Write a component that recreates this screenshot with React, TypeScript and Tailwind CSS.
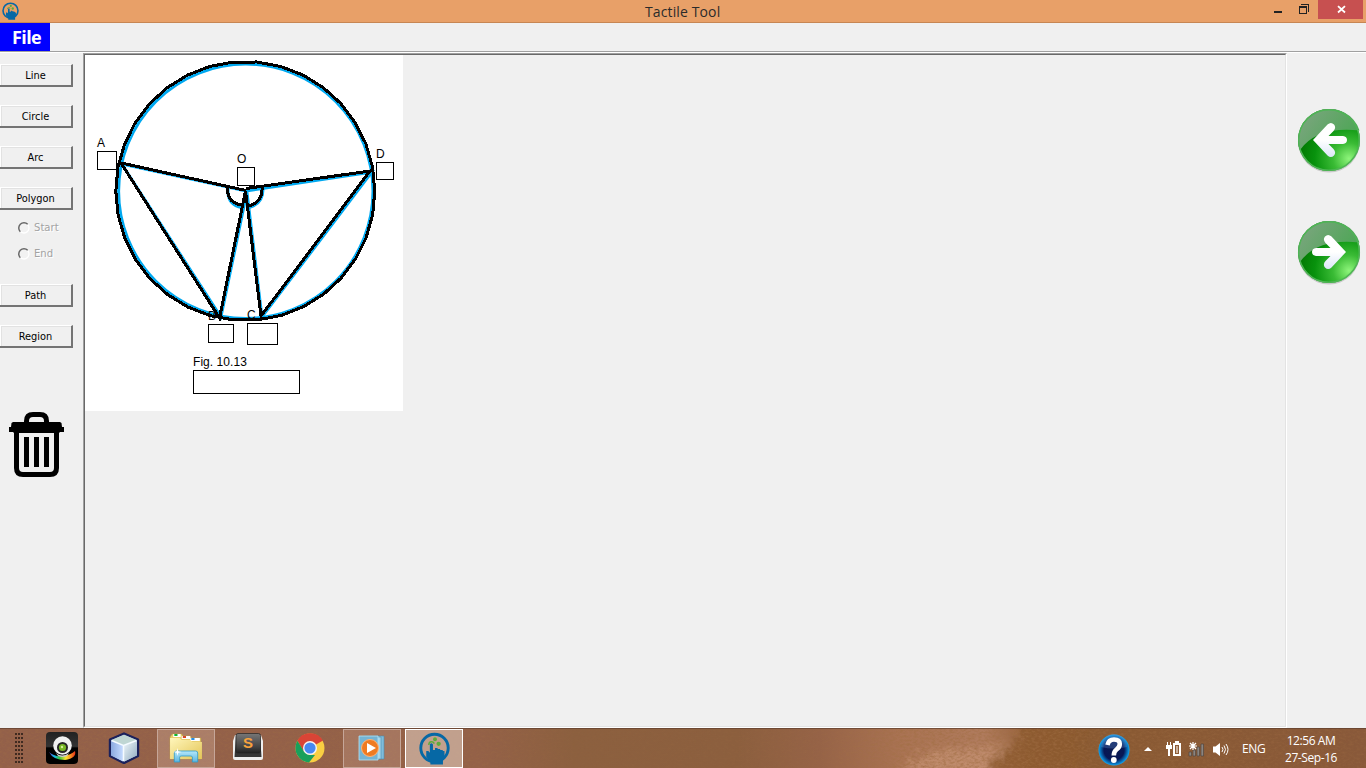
import React from "react";

const TOOLS_TOP = ["Line", "Circle", "Arc", "Polygon"];
const TOOLS_BOTTOM = ["Path", "Region"];

function HandIcon({ className }: { className: string }) {
  return (
    <svg viewBox="0 0 30 32" className={className}>
      <circle cx="15" cy="15.5" r="13.3" fill="none" stroke="#0668a5" strokeWidth="2.800" />
      <path d="M10.500 12q1.500-2 3 0v5.500h2v-2h2.500v1h2.500v1h2.500v1h1.700v6l-1.500 3v4H11v-3l-4-4.500v-5.500h2l1.500 1.500z" fill="#0668a5" />
      <circle cx="15.500" cy="7" r="1.900" fill="#5cac3b" />
      <circle cx="19" cy="11.500" r="2.100" fill="#5cac3b" />
      <path d="M9.500 12.500q0-3 2.500-3t2.500 2" fill="none" stroke="#5cac3b" strokeWidth="1.400" />
    </svg>
  );
}

function TitleBar() {
  return (
    <header className="flex h-[23px] shrink-0 border-b border-[#c78653] bg-[#e8a068] text-[#2b2b2b]">
      <div className="w-[645px] pt-[2px] pl-[2px]">
        <HandIcon className="h-[18px] w-[17px]" />
      </div>
      <div className="w-[625px] whitespace-nowrap font-['Open_Sans','Noto_Sans',sans-serif] text-[14px] leading-[23px] tracking-[0.120px]">Tactile Tool</div>
      <svg className="h-[22px] w-[48px]" viewBox="0 0 48 22" shapeRendering="crispEdges">
        <path d="M4 11h8v2H4z" fill="#222" />
        <path d="M29.500 6.500h7v7h-7zM31 4.500h7.500V12" fill="none" stroke="#222" />
        <path d="M29 6h8v2h-8z" fill="#222" />
      </svg>
      <div className="flex h-[19px] w-[45px] justify-center bg-[#c75050]">
        <svg className="mt-[5px] ml-[1px] h-[9px] w-[9px]" viewBox="0 0 9 9">
          <path d="M1 1.200l7 6.300M8 1.200l-7 6.300" stroke="#fff" strokeWidth="1.800" />
        </svg>
      </div>
    </header>
  );
}

function ToolButton({ label }: { label: string }) {
  return (
    <button className="h-[23px] w-[73px] border-t border-r-2 border-b-2 border-t-white border-r-[#747474] border-b-[#747474] bg-[#f0f0f0] pt-[2px] text-[10.900px] leading-[18px] text-black shadow-[inset_1px_0_#fff,inset_2px_1px_#e2e2e2]">
      {label}
    </button>
  );
}

function RadioRow({ label }: { label: string }) {
  return (
    <div className="flex h-[26px] items-center gap-[4px] pl-[18px] text-[11.200px] text-[#a3a3a3] [text-shadow:1px_1px_#fff]">
      <svg className="h-[12px] w-[12px]" viewBox="0 0 12 12">
        <circle cx="6" cy="6" r="5" fill="#f2f2f2" stroke="#fff" strokeWidth="1.300" />
        <path d="M2.300 9.700A5 5 0 0 1 9.700 2.300" fill="none" stroke="#666" strokeWidth="1.500" />
      </svg>
      <span className="pt-[1px]">{label}</span>
    </div>
  );
}

function TrashIcon() {
  return (
    <svg className="mt-[64px] ml-[9px] h-[65px] w-[55px]" viewBox="0 0 55 65">
      <path d="M15 12V9q0-9 9-9h7q9 0 9 9v3h-5V9q0-4-4-4h-7q-4 0-4 4v3z" />
      <path d="M4 10h47l1.500 1 .5 4h2v5h-4.500v1h-46v-1H0v-5h2l.500-4z" />
      <path d="M7.500 18v38q0 6.500 6.500 6.500h27q6.500 0 6.500-6.500V18" fill="none" stroke="#000" strokeWidth="5" />
      <path d="M15 25h5v30h-5zM25 25h5v30h-5zM35 25h5v30h-5z" />
    </svg>
  );
}

function Sidebar() {
  return (
    <aside className="w-[83px] shrink-0 pt-[11px] font-['DejaVu_Sans_Condensed','DejaVu_Sans',sans-serif]">
      <div className="flex flex-col gap-[18px]">
        {TOOLS_TOP.map((t) => <ToolButton key={t} label={t} />)}
      </div>
      <div className="h-[74px] pt-[5px]">
        <RadioRow label="Start" />
        <RadioRow label="End" />
      </div>
      <div className="flex flex-col gap-[18px]">
        {TOOLS_BOTTOM.map((t) => <ToolButton key={t} label={t} />)}
      </div>
      <TrashIcon />
    </aside>
  );
}

const ring = Array.from({ length: 34 }, (_, i) => {
  const a = (i / 34) * Math.PI * 2 - Math.PI / 2 + 0.09;
  return `${(160.3 + 129.5 * Math.cos(a)).toFixed(1)},${(136 + 129.5 * Math.sin(a)).toFixed(1)}`;
}).join(" ");

function Figure() {
  return (
    <svg className="block h-[356px] w-[318px] bg-white" viewBox="0 0 318 356">
      <g fill="none" stroke="#00a8ef" strokeWidth="3">
        <circle cx="160.800" cy="136.300" r="127.200" strokeWidth="3" />
        <path d="M36 109L161 136L287 117L177 262L162 137L136 262L36.500 108.500" strokeWidth="2.800" />
        <path d="M143 134q-1 16 14 18.500M178 134q0 15-14 18.500" />
      </g>
      <g fill="none" stroke="#000" strokeWidth="3" shapeRendering="crispEdges">
        <polygon points={ring} />
        <path d="M34 107.500L161 135.500M36 108L134.500 263L160.500 136L176 261L285 116L161 133.500" />
        <path d="M142.500 132q-1 15.500 14 18M177 132q1 15-13 19" />
      </g>
      <g fill="none" stroke="#000" shapeRendering="crispEdges">
        <path d="M12.500 96.500h19v18h-19zM152.500 112.500h17v18h-17zM291.500 107.500h17v17h-17zM123.500 269.500h25v18h-25zM162.500 268.500h30v21h-30zM108.500 315.500h106v23h-106z" />
      </g>
      <g className="font-['Liberation_Sans',sans-serif] text-[12px]" fill="#000">
        <text x="12" y="92">A</text>
        <text x="152" y="108">O</text>
        <text x="291" y="103">D</text>
        <text x="123" y="265">B</text>
        <text x="162" y="264">C</text>
        <text x="108" y="311" className="tracking-[0.050px]">Fig. 10.13</text>
      </g>
    </svg>
  );
}

function ArrowOrb({ flip, id }: { flip: boolean; id: string }) {
  return (
    <svg className="h-[66px] w-[66px]" viewBox="0 0 66 66">
      <defs>
        <radialGradient id={id} cx="0.82" cy="0.8" r="0.85">
          <stop offset="0" stopColor="#8ef57b" />
          <stop offset="0.3" stopColor="#3abb35" />
          <stop offset="0.65" stopColor="#08920d" />
          <stop offset="1" stopColor="#007400" />
        </radialGradient>
        <linearGradient id={id + "g"} x1="0" y1="0" x2="1" y2="0.5">
          <stop offset="0" stopColor="#80a583" />
          <stop offset="1" stopColor="#4da655" />
        </linearGradient>
        <linearGradient id={id + "w"} x1="0" y1="0" x2="0" y2="1">
          <stop offset="0.5" stopColor="#fff" />
          <stop offset="1" stopColor="#dbe7f8" />
        </linearGradient>
      </defs>
      <circle cx="33" cy="34.500" r="31" fill="#999" opacity=".45" />
      <circle cx="33" cy="33" r="31" fill={`url(#${id})`} />
      <path d="M4 43A31 31 0 1 1 63.500 23.500Q21 19 4 43z" fill={`url(#${id}g)`} />
      <circle cx="33" cy="33" r="30.300" fill="none" stroke="#4fb456" strokeWidth="1.500" />
      <g transform={flip ? "matrix(-1 0 0 1 67 0)" : undefined}>
        <path d="M17 33L31.500 17.500Q35 14.500 38 17.500Q40.500 20.500 37.500 24L32.500 29H47Q51 29.500 51 33Q51 36.500 47 37H32.500L37.500 42Q40.500 45.500 38 48.500Q35 51.500 31.500 48.500z" fill={`url(#${id}w)`} />
      </g>
    </svg>
  );
}

function Workspace() {
  return (
    <div className="flex min-h-0 flex-1">
      <Sidebar />
      <main className="w-[1204px] shrink-0 border-t border-r border-b border-l border-t-[#a0a0a0] border-r-white border-b-white border-l-[#a0a0a0]">
        <div className="h-full border border-t-[#696969] border-r-[#e3e3e3] border-b-[#e3e3e3] border-l-[#696969]">
          <Figure />
        </div>
      </main>
      <aside className="flex w-[79px] flex-col gap-[46px] pt-[54px] pl-[9px]">
        <ArrowOrb flip={false} id="prev" />
        <ArrowOrb flip id="next" />
      </aside>
    </div>
  );
}

function WebcamIcon() {
  return (
    <svg className="h-[32px] w-[32px]" viewBox="0 0 32 32">
      <defs>
        <linearGradient id="rainbow">
          <stop offset="0" stopColor="#6838c8" /><stop offset=".2" stopColor="#12b9ed" /><stop offset=".4" stopColor="#3dc63b" />
          <stop offset=".65" stopColor="#ffe32e" /><stop offset="1" stopColor="#e93118" />
        </linearGradient>
        <linearGradient id="camdark" x1="0" y1="0" x2="0" y2="1">
          <stop offset="0" stopColor="#222" /><stop offset=".45" stopColor="#333" /><stop offset=".5" stopColor="#000" />
        </linearGradient>
      </defs>
      <rect width="32" height="32" rx="4" fill="url(#camdark)" />
      <path d="M3 20Q8 25 17 24Q25 23 29 19Q31 26 19 28Q7 28 3 20z" fill="url(#rainbow)" />
      <circle cx="16.500" cy="13.500" r="9.300" fill="#f1f1f1" />
      <path d="M10 21q6 5 13 0l-2 3q-5 2-9 0z" fill="#ccc" />
      <circle cx="16.500" cy="15.500" r="5.500" fill="#252525" />
      <circle cx="16.500" cy="15.500" r="3.600" fill="#76b624" />
      <circle cx="16" cy="15" r="1.200" fill="#d4ef99" />
    </svg>
  );
}

function CubeIcon() {
  return (
    <svg className="h-[32px] w-[32px]" viewBox="0 0 32 32">
      <defs>
        <linearGradient id="cubeleft"><stop stopColor="#8ba9df" /><stop offset="1" stopColor="#c5dbff" /></linearGradient>
        <linearGradient id="cuberight" x1="0" y1="0" x2="1" y2="1"><stop stopColor="#eef7fa" /><stop offset="1" stopColor="#91abc0" /></linearGradient>
      </defs>
      <path d="M16 1.500L30 7.500V24L16 31L2 24V7.500z" fill="#aac0db" stroke="#1b215b" strokeWidth="2.400" strokeLinejoin="round" />
      <path d="M16 2.700L28.500 8L16 13L3.500 8z" fill="#bfd6d3" />
      <path d="M3 8.500L15 13.500V29.500L3 23.500z" fill="url(#cubeleft)" />
      <path d="M16 13.500L29 8.500V23.500L16 29.500z" fill="url(#cuberight)" />
      <path d="M3.500 8.500L15.500 13.500L28.500 8.500M15.500 14v15" fill="none" stroke="#f5fbff" strokeWidth="1.500" />
    </svg>
  );
}

function ExplorerIcon() {
  return (
    <svg className="h-[32px] w-[34px]" viewBox="0 0 32 32" preserveAspectRatio="none">
      <defs>
        <linearGradient id="folder" x1="0" y1="0" x2="1" y2="1"><stop stopColor="#fff6bc" /><stop offset="1" stopColor="#e4c657" /></linearGradient>
        <linearGradient id="stand" x1="0" y1="0" x2="0" y2="1"><stop stopColor="#b4e7fa" /><stop offset="1" stopColor="#5bb5e0" /></linearGradient>
      </defs>
      <path d="M1 5l2-3h9l1 2h7l1 2h9v21H1z" fill="#e9cf6d" stroke="#bda041" strokeWidth=".6" />
      <path d="M4 2h7v3H4z" fill="#fff" /><path d="M5 2h3v2H5z" fill="#12b52e" />
      <path d="M12 4h8v3h-8z" fill="#fff" /><path d="M13 4h3v2h-3z" fill="#d84727" />
      <path d="M20 6h9v3h-9z" fill="#fff" /><path d="M21 6h3v2h-3z" fill="#268ee4" />
      <path d="M1 6h9l2 2h8l2 2h9v17H1z" fill="url(#folder)" />
      <path d="M5 30V21q0-2 2-2h18q2 0 2 2v9h-5v-5q0-1-2-1h-8q-2 0-2 1v5z" fill="url(#stand)" stroke="#329cc8" strokeWidth=".8" />
      <path d="M8 16l.700 3.300 3.300.700-3.300.700-.700 3.300-.700-3.300-3.300-.700 3.300-.700z" fill="#fff" />
    </svg>
  );
}

function SublimeIcon() {
  return (
    <svg className="h-[32px] w-[32px]" viewBox="0 0 32 32">
      <defs><linearGradient id="keycap" x1="0" y1="0" x2="0" y2="1"><stop stopColor="#777" /><stop offset=".7" stopColor="#424242" /><stop offset="1" stopColor="#222" /></linearGradient></defs>
      <path d="M3 3h26l2 6v17q0 2-2 2H3q-2 0-2-2V9z" fill="#eee" />
      <path d="M4 3h24l1.500 22H2.500z" fill="#363636" />
      <rect x="4" y="1.500" width="24.500" height="19.500" rx="2" fill="url(#keycap)" stroke="#242424" strokeWidth=".7" />
      <text x="16" y="16" textAnchor="middle" className="font-['Liberation_Sans',sans-serif] text-[15px] font-bold" fill="#f8a23c">S</text>
    </svg>
  );
}

function ChromeIcon() {
  return (
    <svg className="h-[30px] w-[30px]" viewBox="-15 -15 30 30">
      <circle r="14.500" fill="#f9cf42" />
      <path d="M0 0L-12.600-7.300A14.500 14.500 0 0 1 12.600-7.300z" fill="#da4436" />
      <path d="M0-7H13A14.500 14.500 0 0 0-12.600-7.300L-6 4z" fill="#da4436" />
      <path d="M-12.600-7.300L-6 3.600Q-3 7 0 7H5L-1 14.500A14.500 14.500 0 0 1-12.600-7.300z" fill="#19a05c" />
      <circle r="7" fill="#f4f4f4" /><circle r="5.600" fill="#4688f2" />
    </svg>
  );
}

function MediaIcon() {
  return (
    <svg className="h-[28px] w-[28px]" viewBox="0 0 28 28">
      <path d="M5 2h21v23H5z" fill="#80bcda" stroke="#4b8bab" strokeWidth=".6" />
      <path d="M3 3h20v22H3z" fill="#a5d4e9" stroke="#4b8bab" strokeWidth=".6" />
      <path d="M1 2h19v24H1z" fill="#75b4d4" stroke="#b4e3f5" strokeWidth=".8" />
      <circle cx="12" cy="14" r="8.500" fill="#ef7b22" stroke="#ffb477" />
      <path d="M9 9l9 5-9 5z" fill="#fff" />
    </svg>
  );
}

const APPS = [
  { icon: <WebcamIcon />, box: "border-transparent" },
  { icon: <CubeIcon />, box: "border-transparent" },
  { icon: <ExplorerIcon />, box: "border-[#c6a698] bg-[#d8b5a3]/35" },
  { icon: <SublimeIcon />, box: "border-transparent" },
  { icon: <ChromeIcon />, box: "border-transparent" },
  { icon: <MediaIcon />, box: "border-[#c6a698] bg-[#d8b5a3]/25" },
  { icon: <HandIcon className="h-[33px] w-[31px]" />, box: "border-white bg-[#dfc9bd]/60" },
];

function TaskbarTexture() {
  return (
    <svg className="absolute inset-0 h-[40px] w-[1366px]" viewBox="0 0 1366 40">
      <defs>
        <linearGradient id="soil">
          <stop offset="0" stopColor="#93604a" /><stop offset=".35" stopColor="#946148" />
          <stop offset=".42" stopColor="#8c603f" /><stop offset=".54" stopColor="#8c5f3e" />
          <stop offset=".6" stopColor="#966347" /><stop offset=".66" stopColor="#aa7353" />
          <stop offset=".72" stopColor="#b07b5d" /><stop offset=".755" stopColor="#946039" />
          <stop offset=".78" stopColor="#8a5a31" /><stop offset="1" stopColor="#89593a" />
        </linearGradient>
        <filter id="grain" x="0" y="0" width="100%" height="100%">
          <feTurbulence type="fractalNoise" baseFrequency=".28 .5" numOctaves="2" seed="7" />
          <feColorMatrix values="0 0 0 0 .36  0 0 0 0 .16  0 0 0 0 .06  1.900 0 0 0 -.75" />
        </filter>
        <filter id="edge" x="-10%" y="-30%" width="120%" height="160%">
          <feTurbulence type="fractalNoise" baseFrequency=".15" numOctaves="2" seed="3" result="n" />
          <feGaussianBlur in="SourceGraphic" stdDeviation="4" result="b" />
          <feDisplacementMap in="b" in2="n" scale="14" />
        </filter>
        <linearGradient id="grainfade">
          <stop offset="0" stopColor="#777" /><stop offset=".35" stopColor="#555" />
          <stop offset=".42" stopColor="#181818" /><stop offset=".6" stopColor="#333" />
          <stop offset=".67" stopColor="#fff" /><stop offset=".75" stopColor="#bbb" />
          <stop offset=".82" stopColor="#777" /><stop offset="1" stopColor="#555" />
        </linearGradient>
        <mask id="grainmask"><rect width="1366" height="40" fill="url(#grainfade)" /></mask>
      </defs>
      <rect width="1366" height="40" fill="url(#soil)" />
      <g filter="url(#edge)">
        <path d="M900 44q20-24 55-23t55-7l-22 32z" fill="#c49272" opacity=".75" />
        <path d="M986 46q8-22 22-26t11-26h60v52z" fill="#8c5a2d" opacity=".85" />
      </g>
      <g mask="url(#grainmask)"><rect width="1366" height="40" filter="url(#grain)" /></g>
      <path d="M0 .5h1366" stroke="#60402f" opacity=".7" />
    </svg>
  );
}

function Tray() {
  return (
    <div className="flex h-full items-center font-['Open_Sans','Noto_Sans',sans-serif] text-[12px] text-white">
      <svg className="mt-[3px] h-[32px] w-[32px]" viewBox="0 0 32 32">
        <defs><radialGradient id="help"><stop stopColor="#0b1b50" /><stop offset=".65" stopColor="#071756" /><stop offset=".88" stopColor="#0873bd" /><stop offset="1" stopColor="#16a5ed" /></radialGradient></defs>
        <circle cx="16" cy="16" r="15.500" fill="url(#help)" />
        <path d="M3 13a13 13 0 0 1 26 0q-13 3-26 0z" fill="#6b9fe0" opacity=".28" />
        <path d="M9.500 11Q10.500 5.500 16 5.500Q21.800 5.500 21.800 10Q21.800 13 18.500 15.500Q15.800 17.500 15.800 21.500" fill="none" stroke="#fff" strokeWidth="4.600" />
        <circle cx="15.800" cy="26" r="2.900" fill="#fff" />
      </svg>
      <svg className="mt-[2px] ml-[14px] h-[6px] w-[8px]" viewBox="0 0 8 6"><path d="M4 1L8 5H0z" fill="#fff" /></svg>
      <svg className="mt-[1px] ml-[14px] h-[17px] w-[15px]" viewBox="0 0 15 17" shapeRendering="crispEdges">
        <path d="M1 2h1v3h2V2h1v3h1v4H4v7H2V9H0V5h1z" fill="#fff" />
        <path d="M7 3h2V1h4v2h2v13H7zM9 5v9h4V5z" fillRule="evenodd" fill="#fff" />
        <path d="M10 6h2v7h-2z" fill="#c9b09d" />
      </svg>
      <svg className="mt-[2px] ml-[7px] h-[16px] w-[17px]" viewBox="0 0 17 16">
        <path d="M1 11h2.500v4H1zM5 9h2.500v6H5zM9 6h2.500v9H9zM13 3h2.500v12H13z" fill="#8b8580" stroke="#51463f" strokeWidth=".7" />
        <path d="M5 1v8M1 5h8M2 2l6 6M8 2L2 8" stroke="#fff" strokeWidth="1.200" />
      </svg>
      <svg className="mt-[2px] ml-[8px] h-[15px] w-[16px]" viewBox="0 0 16 15">
        <path d="M0 4.500h2.500L7 1v13l-4.500-3.500H0z" fill="#fff" />
        <path d="M9 5q2 2.500 0 5M11 3.500q3 4 0 8M13 2q4 5.500 0 11" fill="none" stroke="#fff" strokeWidth="1" />
      </svg>
      <span className="mt-[2px] ml-[13px] w-[24px] tracking-[-0.400px]">ENG</span>
      <div className="mt-[2px] ml-[10px] w-[70px] whitespace-nowrap text-center leading-[17px] tracking-[-0.420px]">
        <div>12:56 AM</div>
        <div>27-Sep-16</div>
      </div>
      <div className="w-[20px]" />
    </div>
  );
}

function Taskbar() {
  return (
    <footer className="relative h-[40px] shrink-0 overflow-hidden">
      <TaskbarTexture />
      <div className="relative flex h-full items-center justify-between">
        <div className="flex items-center gap-[4px]">
          <svg className="ml-[15px] h-[32px] w-[14px]" viewBox="0 0 14 32" shapeRendering="crispEdges">
            {[0, 1, 2, 3, 4, 5, 6, 7].map((r) => (
              <path key={r} d={`M0 ${r * 4 + 1.5}h2m1 0h2m1 0h2`} stroke="#3f2a20" strokeWidth="2" />
            ))}
          </svg>
          {APPS.map((a, i) => (
            <div key={i} className={`flex h-[39px] w-[58px] items-center justify-center border ${a.box}`}>{a.icon}</div>
          ))}
        </div>
        <Tray />
      </div>
    </footer>
  );
}

export default function App() {
  return (
    <div className="flex h-[768px] w-[1366px] flex-col overflow-hidden bg-[#f0f0f0] text-black">
      <TitleBar />
      <nav className="flex h-[30px] shrink-0 border-b border-white">
        <div className="flex w-full border-b border-[#a0a0a0]">
          <div className="h-[28px] w-[50px] bg-[#00f] pl-[12px] font-['Open_Sans','Noto_Sans',sans-serif] text-[18px] leading-[29px] font-bold tracking-[-0.600px] text-white">File</div>
        </div>
      </nav>
      <Workspace />
      <Taskbar />
    </div>
  );
}
